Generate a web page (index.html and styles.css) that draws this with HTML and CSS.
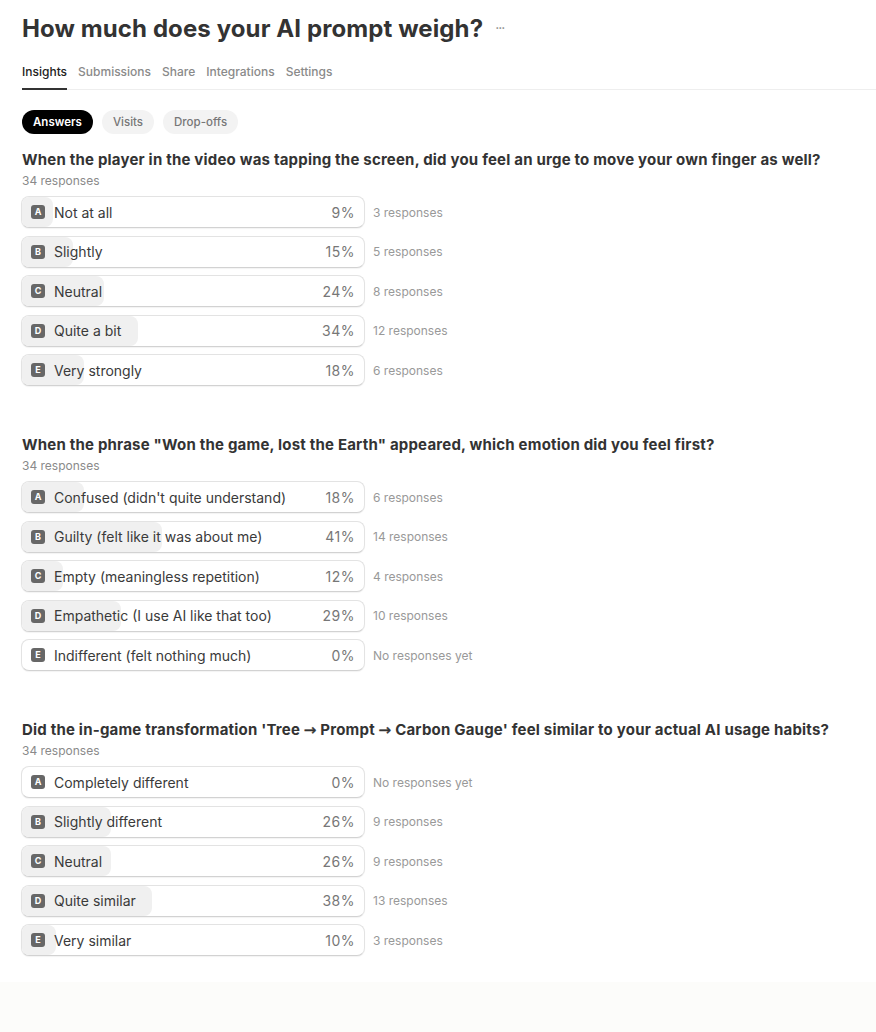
FILE: index.html
```html
<!DOCTYPE html>
<html lang="en">
<head>
	<meta charset="UTF-8">
	<title>How much does your AI prompt weigh?</title>
	<link rel="stylesheet" href="styles.css">
</head>
<body>
<div class="page">
	<div class="title-row">
		<h1>How much does your AI prompt weigh?</h1>
		<span class="more">&middot;&middot;&middot;</span>
	</div>
	<div class="tabs">
		<a class="tab active">Insights</a>
		<a class="tab">Submissions</a>
		<a class="tab">Share</a>
		<a class="tab">Integrations</a>
		<a class="tab">Settings</a>
	</div>
	<div class="pills">
		<span class="pill on">Answers</span>
		<span class="pill">Visits</span>
		<span class="pill">Drop-offs</span>
	</div>

	<div class="question">
		<h2>When the player in the video was tapping the screen, did you feel an urge to move your own finger as well?</h2>
		<div class="count">34 responses</div>
		<div class="options">
			<div class="opt"><div class="bar"><div class="fill" style="width:9%"></div><span class="key">A</span><span class="label">Not at all</span><span class="pct">9%</span></div><span class="resp">3 responses</span></div>
			<div class="opt"><div class="bar"><div class="fill" style="width:15%"></div><span class="key">B</span><span class="label">Slightly</span><span class="pct">15%</span></div><span class="resp">5 responses</span></div>
			<div class="opt"><div class="bar"><div class="fill" style="width:24%"></div><span class="key">C</span><span class="label">Neutral</span><span class="pct">24%</span></div><span class="resp">8 responses</span></div>
			<div class="opt"><div class="bar"><div class="fill" style="width:34%"></div><span class="key">D</span><span class="label">Quite a bit</span><span class="pct">34%</span></div><span class="resp">12 responses</span></div>
			<div class="opt"><div class="bar"><div class="fill" style="width:18%"></div><span class="key">E</span><span class="label">Very strongly</span><span class="pct">18%</span></div><span class="resp">6 responses</span></div>
		</div>
	</div>

	<div class="question">
		<h2>When the phrase "Won the game, lost the Earth" appeared, which emotion did you feel first?</h2>
		<div class="count">34 responses</div>
		<div class="options">
			<div class="opt"><div class="bar"><div class="fill" style="width:18%"></div><span class="key">A</span><span class="label">Confused (didn't quite understand)</span><span class="pct">18%</span></div><span class="resp">6 responses</span></div>
			<div class="opt"><div class="bar"><div class="fill" style="width:41%"></div><span class="key">B</span><span class="label">Guilty (felt like it was about me)</span><span class="pct">41%</span></div><span class="resp">14 responses</span></div>
			<div class="opt"><div class="bar"><div class="fill" style="width:12%"></div><span class="key">C</span><span class="label">Empty (meaningless repetition)</span><span class="pct">12%</span></div><span class="resp">4 responses</span></div>
			<div class="opt"><div class="bar"><div class="fill" style="width:29%"></div><span class="key">D</span><span class="label">Empathetic (I use AI like that too)</span><span class="pct">29%</span></div><span class="resp">10 responses</span></div>
			<div class="opt"><div class="bar"><div class="fill" style="width:0%"></div><span class="key">E</span><span class="label">Indifferent (felt nothing much)</span><span class="pct">0%</span></div><span class="resp">No responses yet</span></div>
		</div>
	</div>

	<div class="question">
		<h2>Did the in-game transformation 'Tree <span class="arrow">→</span> Prompt <span class="arrow">→</span> Carbon Gauge' feel similar to your actual AI usage habits?</h2>
		<div class="count">34 responses</div>
		<div class="options">
			<div class="opt"><div class="bar"><div class="fill" style="width:0%"></div><span class="key">A</span><span class="label">Completely different</span><span class="pct">0%</span></div><span class="resp">No responses yet</span></div>
			<div class="opt"><div class="bar"><div class="fill" style="width:26%"></div><span class="key">B</span><span class="label">Slightly different</span><span class="pct">26%</span></div><span class="resp">9 responses</span></div>
			<div class="opt"><div class="bar"><div class="fill" style="width:26%"></div><span class="key">C</span><span class="label">Neutral</span><span class="pct">26%</span></div><span class="resp">9 responses</span></div>
			<div class="opt"><div class="bar"><div class="fill" style="width:38%"></div><span class="key">D</span><span class="label">Quite similar</span><span class="pct">38%</span></div><span class="resp">13 responses</span></div>
			<div class="opt"><div class="bar"><div class="fill" style="width:10%"></div><span class="key">E</span><span class="label">Very similar</span><span class="pct">10%</span></div><span class="resp">3 responses</span></div>
		</div>
	</div>
</div>
<div class="footer"></div>
</body>
</html>
```

FILE: styles.css
```css
*{
	margin:0;
	padding:0;
	box-sizing:border-box;
}

body{
	font-family: Inter, "Noto Sans", sans-serif;
	color:#37352f;
	background:#fff;
}

.page{
	padding-left:22px;
}

.title-row{
	display:flex;
	align-items:center;
	gap:12px;
	margin-top:12px;
	height:32px;
}

h1{
	font-size:24px;
	font-weight:700;
	color:#333;
	letter-spacing:0.1px;
}

.more{
	font-size:14px;
	color:#888;
	letter-spacing:-1px;
	margin-top:-2px;
}

.tabs{
	display:flex;
	gap:11px;
	margin-top:20px;
	border-bottom:1px solid #eee;
}

.tab{
	font-size:12px;
	line-height:16px;
	font-weight:500;
	color:#8a8a8a;
	padding-bottom:8px;
	border-bottom:2px solid transparent;
	margin-bottom:-1px;
}

.tab.active{
	color:#222;
	border-bottom-color:#333;
}

.pills{
	display:flex;
	gap:9px;
	margin-top:20px;
}

.pill{
	height:24px;
	line-height:24px;
	padding:0 11px;
	border-radius:12px;
	font-size:11.5px;
	font-weight:500;
	color:#777;
	background:#f3f3f3;
}

.pill.on{
	background:#000;
	color:#fff;
	font-weight:600;
}

.question{
	margin-top:49px;
}

.pills + .question{
	margin-top:16px;
}

h2{
	font-size:15px;
	line-height:20px;
	font-weight:700;
	color:#333;
	letter-spacing:0.2px;
}

.arrow{
	font-family:"DejaVu Sans", sans-serif;
	font-weight:400;
	-webkit-text-stroke:0.4px #333;
}

.count{
	margin-top:3px;
	font-size:12px;
	line-height:16px;
	color:#8a8a8a;
}

.options{
	display:flex;
	flex-direction:column;
	gap:7.5px;
	margin-top:7px;
	margin-left:-1px;
}

.opt{
	display:flex;
	align-items:center;
	gap:8px;
}

.bar{
	position:relative;
	display:flex;
	align-items:center;
	width:344px;
	height:32px;
	padding:0 9px 0 9px;
	border:1px solid #e3e3e3;
	border-bottom-color:#d2d2d2;
	border-radius:8px;
	box-shadow:0 1px 1px rgba(0,0,0,0.05);
	overflow:hidden;
	background:#fff;
}

.fill{
	position:absolute;
	left:0;
	top:0;
	bottom:0;
	background:#f0f0f0;
	border-radius:0 8px 8px 0;
}

.key{
	position:relative;
	width:14px;
	height:14px;
	border-radius:3px;
	background:#676767;
	color:#fff;
	font-size:9px;
	font-weight:700;
	line-height:14px;
	text-align:center;
	margin-right:9px;
}

.label{
	position:relative;
	flex:1;
	font-size:14px;
	color:#3a3a3a;
}

.pct{
	position:relative;
	font-size:14px;
	color:#777;
	letter-spacing:0.5px;
}

.resp{
	font-size:12px;
	color:#999;
}

.footer{
	margin-top:26px;
	height:52px;
	background:#fcfcfa;
}
```
